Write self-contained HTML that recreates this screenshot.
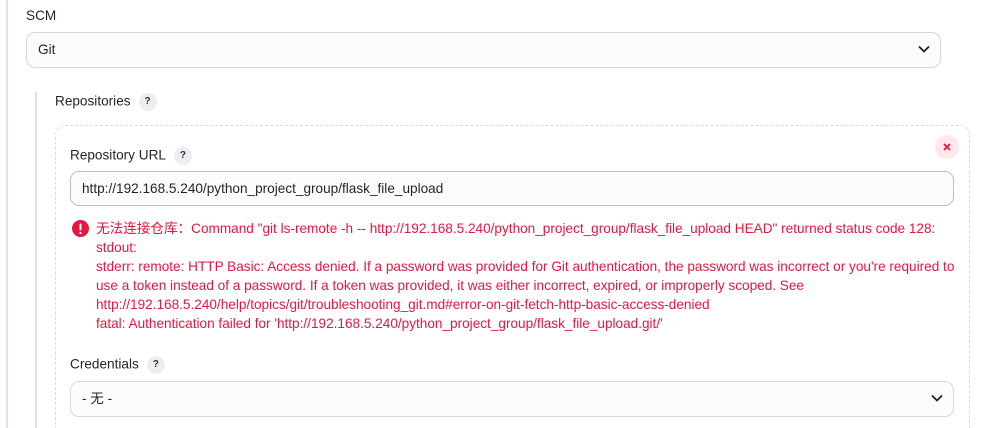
<!DOCTYPE html>
<html><head><meta charset="utf-8"><style>
*{box-sizing:border-box;margin:0;padding:0}
html,body{width:992px;height:428px;overflow:hidden}
body{background:#fff;font-family:"Liberation Sans","Noto Sans CJK SC",sans-serif;font-size:13.6px;color:#1f2330;position:relative}
.abs{position:absolute}
.vline{position:absolute;width:2px;background:#dde2ea}
.lbl{position:absolute;white-space:nowrap}
.q{display:inline-block;width:18px;height:18px;border-radius:50%;background:#eceef2;color:#333;font-size:10px;font-weight:bold;text-align:center;line-height:18px;margin-left:8px;vertical-align:middle}
.box{position:absolute;border:1px solid #d3d9e3;border-radius:9px;background:#fcfcfd;padding-left:11px;line-height:33px;white-space:nowrap}
.chev{position:absolute;right:10px;top:12px}
.err{position:absolute;left:96px;top:219px;color:#e5173f;line-height:19px;white-space:nowrap}
</style></head><body>
<div class="vline" style="left:6px;top:0;height:428px"></div>
<div class="lbl" style="left:26px;top:8px">SCM</div>
<div class="box" style="left:26px;top:32px;width:915px;height:36px">Git
<svg class="chev" width="12" height="8" viewBox="0 0 12 8"><path d="M1 1.5L6 6.5L11 1.5" fill="none" stroke="#222" stroke-width="1.8"/></svg></div>
<div class="vline" style="left:35px;top:92px;height:336px"></div>
<div class="lbl" style="left:55px;top:93px">Repositories<span class="q">?</span></div>
<div class="abs" style="left:55px;top:125px;width:915px;height:303px;border:1px dashed #d6dbe3;border-bottom:none;border-radius:10px 10px 0 0"></div>
<div class="abs" style="left:935px;top:135px;width:24px;height:24px;border-radius:50%;background:#fde8ea"><svg width="24" height="24" viewBox="0 0 24 24"><path d="M9 9L15 15M15 9L9 15" stroke="#e5173f" stroke-width="1.8"/></svg></div>
<div class="lbl" style="left:70px;top:147px">Repository URL<span class="q">?</span></div>
<div class="box" style="left:70px;top:171px;width:884px;height:35px;border-color:#b6c0cc">http://192.168.5.240/python_project_group/flask_file_upload</div>
<svg class="abs" style="left:72px;top:220px" width="17" height="17" viewBox="0 0 17 17"><circle cx="8.5" cy="8.5" r="8.5" fill="#e5173f"/><rect x="7.5" y="3.5" width="2" height="7" rx="1" fill="#fff"/><circle cx="8.5" cy="13" r="1.1" fill="#fff"/></svg>
<div class="err">无法连接仓库：Command "git ls-remote -h -- http://192.168.5.240/python_project_group/flask_file_upload HEAD" returned status code 128:<br>stdout:<br>stderr: remote: HTTP Basic: Access denied. If a password was provided for Git authentication, the password was incorrect or you're required to<br>use a token instead of a password. If a token was provided, it was either incorrect, expired, or improperly scoped. See<br>http://192.168.5.240/help/topics/git/troubleshooting_git.md#error-on-git-fetch-http-basic-access-denied<br>fatal: Authentication failed for 'http://192.168.5.240/python_project_group/flask_file_upload.git/'</div>
<div class="lbl" style="left:70px;top:356px">Credentials<span class="q">?</span></div>
<div class="box" style="left:70px;top:381px;width:884px;height:36px">- 无 -
<svg class="chev" width="12" height="8" viewBox="0 0 12 8"><path d="M1 1.5L6 6.5L11 1.5" fill="none" stroke="#222" stroke-width="1.8"/></svg></div>
</body></html>
